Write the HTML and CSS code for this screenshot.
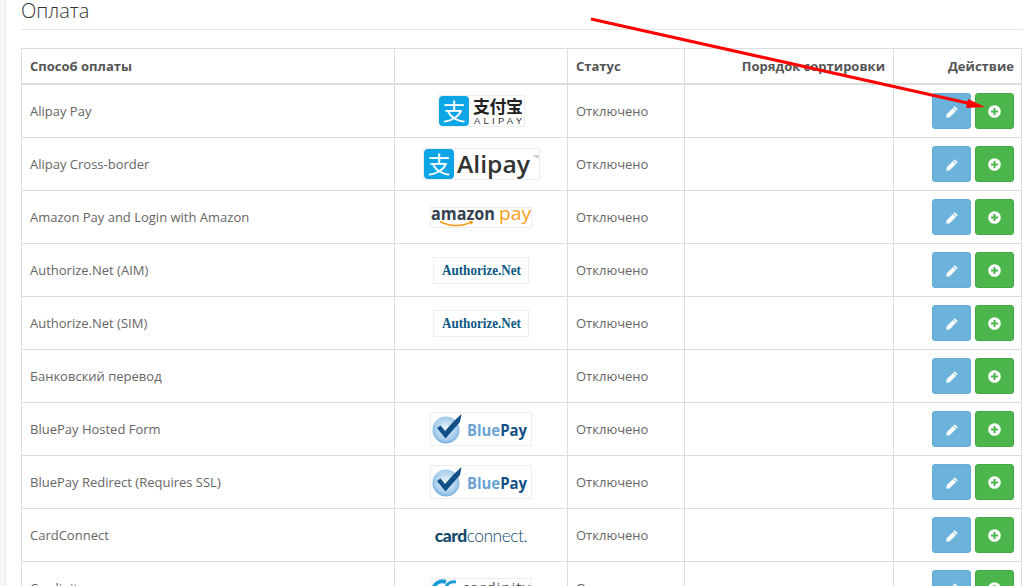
FILE: index.html
```html
<!DOCTYPE html>
<html lang="ru">
<head>
<meta charset="utf-8">
<title>Оплата</title>
<link rel="stylesheet" href="styles.css">
</head>
<body>
<svg class="defs" width="0" height="0" aria-hidden="true">
  <defs>
    <symbol id="pencil" viewBox="0 0 12 12"><path d="M8.700 .3 11.700 3.300 10.500 4.500 7.500 1.500Z M7 2 10 5 3.700 11.300 .3 11.700 .7 8.300Z" fill="#fff"/></symbol>
    <symbol id="plus" viewBox="0 0 13 13"><circle cx="6.500" cy="6.500" r="6.300" fill="#fff"/><path d="M5.500 3H7.500V5.500H10V7.500H7.500V10H5.500V7.500H3V5.500H5.500Z" fill="#4cb64c"/></symbol>
    <symbol id="authorize" viewBox="0 0 96 27"><rect x=".5" y=".5" width="95" height="26" fill="#fff" stroke="#eee"/><text x="9" y="18" textLength="79" lengthAdjust="spacingAndGlyphs" class="t-auth">Authorize.Net</text></symbol>
    <symbol id="bluepay" viewBox="0 0 102 34"><defs><radialGradient id="orb" cx=".5" cy=".45" r=".6"><stop offset="0" stop-color="#eef6fc"/><stop offset=".7" stop-color="#a5cdec"/><stop offset="1" stop-color="#5d9fd6"/></radialGradient></defs><rect x=".5" y=".5" width="101" height="33" fill="#fff" stroke="#eee"/><circle cx="16" cy="18" r="13.500" fill="url(#orb)"/><path d="M7 16 10.500 13.500 15 19 24 9 31.500 2 30 10 15.500 26.500Z" fill="#114f86"/><text x="37" y="24" textLength="60" lengthAdjust="spacingAndGlyphs" class="t-blue">Blue<tspan class="t-pay">Pay</tspan></text></symbol>
  </defs>
</svg>
<div class="page">
  <div class="rail"></div>
  <main class="content">
    <h1 class="title">Оплата</h1>
    <table class="grid">
      <colgroup><col class="c1"><col class="c2"><col class="c3"><col class="c4"><col class="c5"></colgroup>
      <thead>
        <tr><th>Способ оплаты</th><th></th><th>Статус</th><th class="right">Порядок сортировки</th><th class="right">Действие</th></tr>
      </thead>
      <tbody>
        <tr>
          <td>Alipay Pay</td>
          <td class="logo"><svg width="87" height="32" viewBox="0 0 87 32"><rect x=".5" y=".5" width="86" height="31" fill="#fff" stroke="#eee"/><rect x="1" y="1" width="30" height="30" rx="4" fill="#0ea5e6"/><text x="16" y="25" text-anchor="middle" class="t-zhi">支</text><text x="35" y="18" textLength="50" class="t-cn">支付宝</text><text x="36" y="29" textLength="48" class="t-ali">ALIPAY</text></svg></td>
          <td>Отключено</td><td></td>
          <td class="actions"><a class="btn edit"><svg width="12" height="12"><use href="#pencil"/></svg></a><a class="btn add"><svg width="13" height="13"><use href="#plus"/></svg></a></td>
        </tr>
        <tr>
          <td>Alipay Cross-border</td>
          <td class="logo"><svg width="117" height="32" viewBox="0 0 117 32"><rect x=".5" y=".5" width="116" height="31" fill="#fff" stroke="#eee"/><rect x="1" y="1" width="30" height="30" rx="4" fill="#0ea5e6"/><text x="16" y="25" text-anchor="middle" class="t-zhi">支</text><text x="34" y="25" textLength="73" lengthAdjust="spacingAndGlyphs" class="t-alipay">Alipay</text><text x="110" y="10" class="t-tm">TM</text></svg></td>
          <td>Отключено</td><td></td>
          <td class="actions"><a class="btn edit"><svg width="12" height="12"><use href="#pencil"/></svg></a><a class="btn add"><svg width="13" height="13"><use href="#plus"/></svg></a></td>
        </tr>
        <tr>
          <td>Amazon Pay and Login with Amazon</td>
          <td class="logo"><svg width="102" height="21" viewBox="0 0 102 21"><rect x=".5" y=".5" width="101" height="20" fill="#fff" stroke="#eee"/><text x="1" y="13" textLength="64" lengthAdjust="spacingAndGlyphs" class="t-amz">amazon</text><text x="69" y="13" textLength="32" lengthAdjust="spacingAndGlyphs" class="t-amzpay">pay</text><path d="M10 14.500C20 20 30 20 42 15" fill="none" stroke="#f79c1c" stroke-width="1.500"/><path d="M39 14 43 14 42 18Z" fill="#f79c1c"/></svg></td>
          <td>Отключено</td><td></td>
          <td class="actions"><a class="btn edit"><svg width="12" height="12"><use href="#pencil"/></svg></a><a class="btn add"><svg width="13" height="13"><use href="#plus"/></svg></a></td>
        </tr>
        <tr>
          <td>Authorize.Net (AIM)</td>
          <td class="logo"><svg width="96" height="27"><use href="#authorize"/></svg></td>
          <td>Отключено</td><td></td>
          <td class="actions"><a class="btn edit"><svg width="12" height="12"><use href="#pencil"/></svg></a><a class="btn add"><svg width="13" height="13"><use href="#plus"/></svg></a></td>
        </tr>
        <tr>
          <td>Authorize.Net (SIM)</td>
          <td class="logo"><svg width="96" height="27"><use href="#authorize"/></svg></td>
          <td>Отключено</td><td></td>
          <td class="actions"><a class="btn edit"><svg width="12" height="12"><use href="#pencil"/></svg></a><a class="btn add"><svg width="13" height="13"><use href="#plus"/></svg></a></td>
        </tr>
        <tr>
          <td>Банковский перевод</td>
          <td class="logo"></td>
          <td>Отключено</td><td></td>
          <td class="actions"><a class="btn edit"><svg width="12" height="12"><use href="#pencil"/></svg></a><a class="btn add"><svg width="13" height="13"><use href="#plus"/></svg></a></td>
        </tr>
        <tr>
          <td>BluePay Hosted Form</td>
          <td class="logo"><svg width="102" height="34"><use href="#bluepay"/></svg></td>
          <td>Отключено</td><td></td>
          <td class="actions"><a class="btn edit"><svg width="12" height="12"><use href="#pencil"/></svg></a><a class="btn add"><svg width="13" height="13"><use href="#plus"/></svg></a></td>
        </tr>
        <tr>
          <td>BluePay Redirect (Requires SSL)</td>
          <td class="logo"><svg width="102" height="34"><use href="#bluepay"/></svg></td>
          <td>Отключено</td><td></td>
          <td class="actions"><a class="btn edit"><svg width="12" height="12"><use href="#pencil"/></svg></a><a class="btn add"><svg width="13" height="13"><use href="#plus"/></svg></a></td>
        </tr>
        <tr>
          <td>CardConnect</td>
          <td class="logo"><span class="cardconnect"><b>card</b>connect.</span></td>
          <td>Отключено</td><td></td>
          <td class="actions"><a class="btn edit"><svg width="12" height="12"><use href="#pencil"/></svg></a><a class="btn add"><svg width="13" height="13"><use href="#plus"/></svg></a></td>
        </tr>
        <tr>
          <td>Cardinity</td>
          <td class="logo"><svg width="102" height="21" viewBox="0 0 102 21"><rect x=".5" y=".5" width="101" height="20" fill="#fff" stroke="#eee"/><path d="M3 12C4 5 10 2 16 4" fill="none" stroke="#1a9ad6" stroke-width="4"/><path d="M15 12C16 6 20 3 26 4" fill="none" stroke="#1a9ad6" stroke-width="3"/><text x="32" y="15" textLength="68" class="t-cardinity">cardinity</text></svg></td>
          <td>Отключено</td><td></td>
          <td class="actions"><a class="btn edit"><svg width="12" height="12"><use href="#pencil"/></svg></a><a class="btn add"><svg width="13" height="13"><use href="#plus"/></svg></a></td>
        </tr>
      </tbody>
    </table>
  </main>
</div>
<svg class="arrow" width="1032" height="586" viewBox="0 0 1032 586" aria-hidden="true"><path d="M591 19 972 104" fill="none" stroke="#f00" stroke-width="3"/><path d="M985 107 968 99 966 108 Z" fill="#f00"/></svg>
</body>
</html>
```
FILE: styles.css
```css
html, body {
  margin: 0;
  height: 586px;
  overflow: hidden;
  background: #fff;
}
body {
  font-family: "Open Sans", sans-serif;
  font-size: 13px;
  color: #666;
}
.defs { position: absolute; }
.page { display: flex; align-items: flex-start; }
.rail {
  flex: 0 0 5px;
  height: 586px;
  background: #f5f5f5;
  border-right: 1px solid #e8e8e8;
}
.content { flex: 1; padding: 0 9px 0 15px; min-width: 0; }
.title {
  margin: 0 0 18px;
  height: 29px;
  border-bottom: 1px solid #e6e6e6;
  font-size: 20px;
  font-weight: 300;
  line-height: 22px;
  color: #333;
}
.grid {
  width: 1001px;
  table-layout: fixed;
  border-collapse: collapse;
}
.c1 { width: 373px; }
.c2 { width: 173px; }
.c3 { width: 117px; }
.c4 { width: 209px; }
.grid th, .grid td {
  border: 1px solid #ddd;
  padding: 0 8px;
  text-align: left;
}
.grid th {
  height: 34px;
  border-bottom-width: 2px;
  font-weight: 700;
  color: #555;
}
.grid th:last-child { padding-right: 7px; }
.grid td { height: 52px; }
.grid .right { text-align: right; }
.grid .logo { text-align: center; padding: 0; line-height: 0; }
.logo svg { vertical-align: middle; }
.grid .actions { text-align: right; white-space: nowrap; line-height: 0; padding-right: 7px; }
.btn {
  display: inline-flex;
  align-items: center;
  justify-content: center;
  box-sizing: border-box;
  width: 39px;
  height: 36px;
  margin-left: 4px;
  border-radius: 3px;
  border: 1px solid;
}
.btn svg { margin-top: 1px; }
.edit { background: #6cb3dc; border-color: #66add6; }
.add { background: #4cb64c; border-color: #43a843; }
.arrow { position: absolute; left: 0; top: 0; pointer-events: none; }
.cardconnect {
  font-family: "Lato", sans-serif;
  font-size: 17.5px;
  font-weight: 300;
  line-height: 17px;
  letter-spacing: -.5px;
  color: #144a69;
  vertical-align: 1px;
}
.cardconnect b { font-weight: 900; }
.t-zhi { font: 400 23px "Noto Sans CJK SC", sans-serif; fill: #fff; }
.t-cn { font: 700 17px "Noto Sans CJK SC", sans-serif; fill: #222; }
.t-ali { font: 400 9.5px "Liberation Sans", sans-serif; fill: #333; }
.t-alipay { font: 600 24px "Open Sans", sans-serif; fill: #333; }
.t-tm { font: 400 4px "Liberation Sans", sans-serif; fill: #888; }
.t-amz { font: 700 17px "Open Sans", sans-serif; fill: #36424f; }
.t-amzpay { font: 400 19px "Open Sans", sans-serif; fill: #f79c1c; }
.t-auth { font: 700 14.5px "Liberation Serif", serif; fill: #0b5783; }
.t-blue { font: 700 16px "Open Sans", sans-serif; fill: #6ba4d2; }
.t-pay { fill: #144f86; }
.t-cardinity { font: 400 15px "Open Sans", sans-serif; fill: #555; }
```
